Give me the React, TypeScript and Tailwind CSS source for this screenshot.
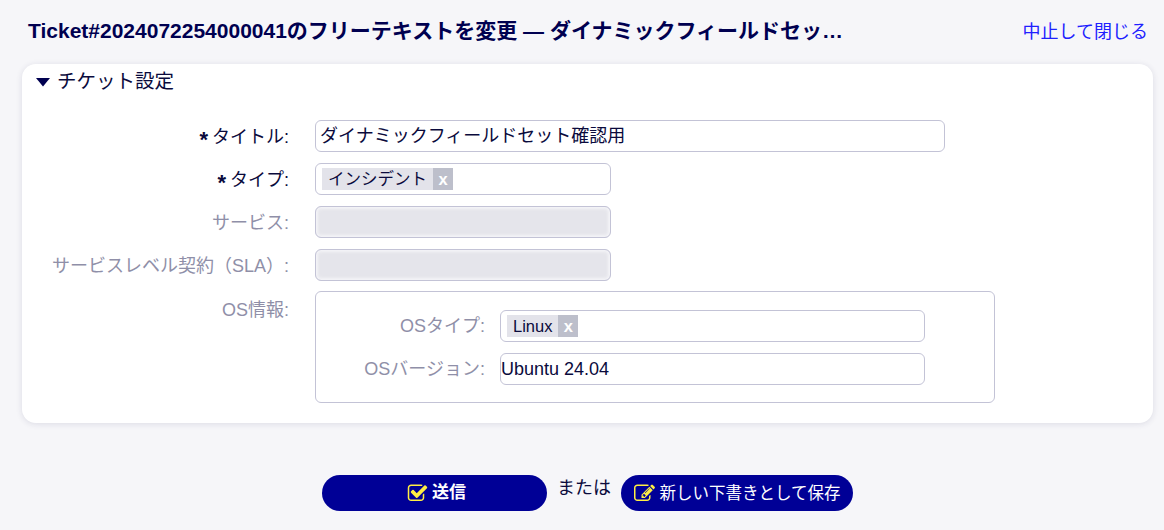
const FONT = "font-['Liberation_Sans','Noto_Sans_CJK_JP',sans-serif]";

const CheckIcon = () => (
  <svg width="21" height="21" viewBox="0 0 1792 1792" className="fill-[#ffee44]">
    <path d="M1472 930v318q0 119-84.5 203.5t-203.5 84.5h-832q-119 0-203.5-84.5t-84.5-203.5v-832q0-119 84.5-203.5t203.5-84.5h832q63 0 117 25 15 7 18 23 3 17-9 29l-49 49q-10 10-23 10-3 0-9-2-23-6-45-6h-832q-66 0-113 47t-47 113v832q0 66 47 113t113 47h832q66 0 113-47t47-113v-254q0-13 9-22l64-64q10-10 23-10 6 0 12 3 20 8 20 29zm231-489l-814 814q-24 24-57 24t-57-24l-430-430q-24-24-24-57t24-57l110-110q24-24 57-24t57 24l263 263 647-647q24-24 57-24t57 24l110 110q24 24 24 57t-24 57z" />
  </svg>
);

const EditIcon = () => (
  <svg width="21" height="21" viewBox="0 0 1792 1792" className="fill-[#ffee44]">
    <path d="M888 1184l116-116-152-152-116 116v56h96v96h56zm440-720q-16-16-33 1l-350 350q-17 17-1 33t33-1l350-350q17-17 1-33zm80 594v190q0 119-84.5 203.5t-203.5 84.5h-832q-119 0-203.5-84.5t-84.5-203.5v-832q0-119 84.5-203.5t203.5-84.5h832q63 0 117 25 15 7 18 23 3 17-9 29l-49 49q-14 14-32 8-23-6-45-6h-832q-66 0-113 47t-47 113v832q0 66 47 113t113 47h832q66 0 113-47t47-113v-126q0-13 9-22l64-64q15-15 35-7t20 29zm-96-738l288 288-672 672h-288v-288zm444 132l-92 92-288-288 92-92q28-28 68-28t68 28l152 152q28 28 28 68t-28 68z" />
  </svg>
);

const Required = () => (
  <span className="mr-[4px] inline-block translate-y-[3px] text-[22px] leading-none font-bold">*</span>
);

const Tag = ({ label }: { label: string }) => (
  <span className="ml-[6px] inline-flex h-[22px] items-stretch bg-[#e3e3ea] text-[16.5px] leading-[23px]">
    <span className="px-[6px]">{label}</span>
    <span className="w-[20px] bg-[#bdbfcb] text-center font-bold text-white">x</span>
  </span>
);

const Row = ({
  label,
  required,
  muted,
  children,
}: {
  label: React.ReactNode;
  required?: boolean;
  muted?: boolean;
  children: React.ReactNode;
}) => (
  <div className="flex items-start gap-[26px]">
    <label
      className={`flex h-[32px] w-[267px] items-center justify-end pt-[2px] text-[18px] whitespace-nowrap ${
        muted ? 'text-[#8f8fa8]' : 'text-[#0a0a3c]'
      }`}
    >
      {required ? <Required /> : null}
      {label}
    </label>
    {children}
  </div>
);

const boxClass = 'flex h-[32px] items-center rounded-[6px] border border-[#c3c3d6] bg-white';
const disabledClass = 'h-[32px] w-[296px] rounded-[6px] border border-[#c3c3d6] bg-[#e5e5eb] shadow-[inset_0_0_3px_2px_#f4f4f7]';

export default function App() {
  return (
    <div className={`${FONT} h-[530px] w-[1164px] overflow-hidden bg-[#f6f6f9] text-[#0a0a3c]`}>
      <header className="flex h-[64px] items-start justify-between pr-[16px] pl-[28px]">
        <h1 className="mt-[18px] text-[21px] leading-[26px] font-bold whitespace-nowrap text-[#000050]">
          Ticket#2024072254000041のフリーテキストを変更 — ダイナミックフィールドセッ…
        </h1>
        <a className="mt-[20px] text-[18px] leading-[24px] text-[#2020ff]">中止して閉じる</a>
      </header>

      <section className="mr-[11px] ml-[22px] h-[359px] rounded-[14px] bg-white pt-[5px] shadow-[0_1px_6px_rgba(30,30,80,0.12)]">
        <div className="flex h-[26px] items-center pl-[14px] text-[19.5px]">
          <svg width="14" height="9" viewBox="0 0 14 9" className="mr-[7px]">
            <path d="M0 0h14L7 8.5z" fill="#000050" />
          </svg>
          チケット設定
        </div>

        <div className="mt-[25px] flex flex-col gap-[11px]">
          <Row label="タイトル:" required>
            <div className={`${boxClass} w-[630px] pl-[4px] text-[18px]`}>ダイナミックフィールドセット確認用</div>
          </Row>
          <Row label="タイプ:" required>
            <div className={`${boxClass} w-[296px]`}>
              <Tag label="インシデント" />
            </div>
          </Row>
          <Row label="サービス:" muted>
            <div className={disabledClass} />
          </Row>
          <Row label="サービスレベル契約（SLA）:" muted>
            <div className={disabledClass} />
          </Row>
          <div className="-mt-px">
            <Row label={<span className="mt-[4px]">OS情報:</span>} muted>
              <div className="flex h-[112px] w-[680px] flex-col gap-[11px] rounded-[6px] border border-[#c3c3d6] pt-[18px]">
                <div className="flex gap-[15px]">
                  <span className="flex h-[32px] w-[169px] items-center justify-end text-[18px] text-[#8f8fa8]">
                    OSタイプ:
                  </span>
                  <div className={`${boxClass} w-[425px]`}>
                    <Tag label="Linux" />
                  </div>
                </div>
                <div className="flex gap-[15px]">
                  <span className="flex h-[32px] w-[169px] items-center justify-end text-[18px] whitespace-nowrap text-[#8f8fa8]">
                    OSバージョン:
                  </span>
                  <div className={`${boxClass} w-[425px] text-[18px]`}>Ubuntu 24.04</div>
                </div>
              </div>
            </Row>
          </div>
        </div>
      </section>

      <footer className="mt-[52px] flex items-start pl-[322px]">
        <button
          type="button"
          className="flex h-[36px] w-[225px] items-center justify-center gap-[4px] rounded-full bg-[#000096] pl-[4px] text-[17px] font-bold text-white"
        >
          <CheckIcon />
          送信
        </button>
        <span className="mx-[10px] mt-[1px] text-[18px] leading-[24px]">または</span>
        <button
          type="button"
          className="flex h-[36px] w-[232px] items-center justify-center gap-[4px] rounded-full bg-[#000096] pl-[1px] text-[16.5px] text-white"
        >
          <EditIcon />
          新しい下書きとして保存
        </button>
      </footer>
    </div>
  );
}
